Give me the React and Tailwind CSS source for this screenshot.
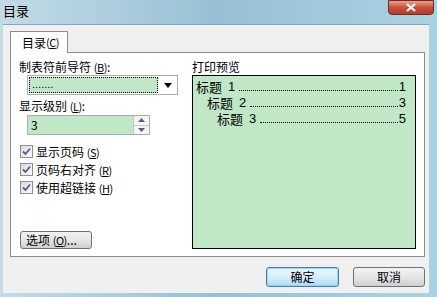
import React from 'react';

const font = { fontFamily: '"Noto Sans CJK SC", "Liberation Sans", sans-serif' };

const Key = ({ k }) => (
  <span className="text-[11px] tracking-[-0.5px]">
    (<span className="underline">{k}</span>)
  </span>
);

const CheckBox = ({ label, k }) => (
  <label className="flex items-center gap-[3px] h-[17px]">
    <span className="w-[13px] h-[13px] border border-[#8e8f8f] bg-gradient-to-br from-[#dcdcdc] to-[#fbfbfb] flex items-center justify-center">
      <svg width="9" height="9" viewBox="0 0 9 9">
        <path d="M1 4.5 L3.5 7 L8 1.5" fill="none" stroke="#4a5f97" strokeWidth="1.8" />
      </svg>
    </span>
    <span className="text-[12px] text-black">
      {label} <Key k={k} />
    </span>
  </label>
);

const Leader = () => (
  <span className="flex-1 self-end mb-[4px] ml-[4px] mr-[1px] border-b border-dotted border-black" />
);

const PreviewLine = ({ indent, level, page }) => (
  <div className={`flex items-center h-[16px] leading-[16px] ${indent}`}>
    <span>标题</span>
    <span className="ml-[6px] font-['Liberation_Sans']">{level}</span>
    <Leader />
    <span className="font-['Liberation_Sans']">{page}</span>
  </div>
);

export default function App() {
  return (
    <div
      className="w-[437px] h-[297px] flex flex-col bg-gradient-to-r from-[#c3dbe6] via-[#97c0d6] to-[#a9d3e2] overflow-hidden"
      style={font}
    >
      {/* title bar */}
      <div className="h-[24px] flex items-start justify-between pl-[3px] pr-[3px]">
        <span className="text-[13px] leading-[21px] text-black">目录</span>
        <div className="w-[46px] h-[15px] rounded-b-[4px] border border-[#6d2a22] bg-gradient-to-b from-[#e8a08f] via-[#c7503a] to-[#b13d2a] flex items-center justify-center">
          <svg width="10" height="9" viewBox="0 0 10 9">
            <path d="M1 1 L9 8 M9 1 L1 8" stroke="white" strokeWidth="2.2" />
          </svg>
        </div>
      </div>

      {/* client area */}
      <div className="flex-1 ml-[3px] mr-[8px] mb-[4px] bg-[#f0f0f0] border-t border-[#8aa4b7] flex flex-col pt-[6px] pl-[7px] pr-[4px]">
        {/* tab header */}
        <div className="flex">
          <div className="h-[22px] w-[58px] bg-white border border-b-0 border-[#898c95] flex items-center pl-[11px] text-[12px] text-black -mb-px relative z-10">
            目录 <Key k="C" />
          </div>
        </div>

        {/* tab panel */}
        <div className="h-[205px] bg-white border border-[#898c95] flex pt-[6px] pl-[8px] pr-[8px] pb-[7px]">
          {/* left column */}
          <div className="w-[173px] flex flex-col text-[12px] text-black">
            <div className="h-[15px] leading-[15px]">
              制表符前导符 <Key k="B" />:
            </div>
            <div className="ml-[8px] mt-[1px] w-[151px] h-[20px] border border-[#abadb3] flex bg-white">
              <div className="flex-1 m-[1px] bg-[#c0e8c6] border border-dotted border-black flex items-end pl-[2px] pb-[3px] leading-[10px] text-[11px] font-['Liberation_Sans']">
                .......
              </div>
              <div className="w-[18px] flex items-center justify-center">
                <svg width="8" height="5" viewBox="0 0 8 5">
                  <path d="M0 0 L8 0 L4 5 Z" fill="black" />
                </svg>
              </div>
            </div>
            <div className="h-[15px] leading-[15px] mt-[3px]">
              显示级别 <Key k="L" />:
            </div>
            <div className="ml-[8px] mt-[2px] w-[123px] h-[20px] border border-[#abadb3] flex">
              <div className="flex-1 bg-[#c0e8c6] flex items-center pl-[3px] text-[12px]">3</div>
              <div className="w-[16px] flex flex-col border-l border-[#c8c8c8] bg-[#f4f4f4]">
                <div className="flex-1 flex items-center justify-center border-b border-[#c8c8c8]">
                  <svg width="7" height="4" viewBox="0 0 7 4">
                    <path d="M0 4 L7 4 L3.5 0 Z" fill="#4d6185" />
                  </svg>
                </div>
                <div className="flex-1 flex items-center justify-center">
                  <svg width="7" height="4" viewBox="0 0 7 4">
                    <path d="M0 0 L7 0 L3.5 4 Z" fill="#4d6185" />
                  </svg>
                </div>
              </div>
            </div>
            <div className="mt-[8px] ml-[1px] flex flex-col gap-[1px]">
              <CheckBox label="显示页码" k="S" />
              <CheckBox label="页码右对齐" k="R" />
              <CheckBox label="使用超链接" k="H" />
            </div>
            <div className="flex-1" />
            <button className="ml-[1px] w-[72px] h-[18px] rounded-[3px] border border-[#707070] bg-gradient-to-b from-[#f2f2f2] via-[#e6e6e6] to-[#cfcfcf] text-[12px] text-left pl-[5px] leading-[14px]">
              选项 <Key k="O" />...
            </button>
          </div>

          {/* right column */}
          <div className="flex-1 flex flex-col text-black">
            <div className="h-[15px] leading-[15px] text-[12px]">打印预览</div>
            <div className="mt-[1px] flex-1 bg-[#c0e8c6] border border-black pt-[3px] pl-[3px] pr-[9px] text-[13px] flex flex-col">
              <PreviewLine indent="" level="1" page="1" />
              <PreviewLine indent="pl-[11px]" level="2" page="3" />
              <PreviewLine indent="pl-[21px]" level="3" page="5" />
            </div>
          </div>
        </div>

        {/* dialog buttons */}
        <div className="flex justify-end gap-[14px] mt-[10px]">
          <button className="w-[73px] h-[20px] rounded-[3px] border border-[#3c7fb1] bg-gradient-to-b from-[#eaf6fd] via-[#d9f0fc] to-[#a7d9f5] shadow-[inset_0_0_0_1px_#9fd5f3] text-[12px] text-black">
            确定
          </button>
          <button className="w-[72px] h-[20px] rounded-[3px] border border-[#707070] bg-gradient-to-b from-[#f2f2f2] via-[#e6e6e6] to-[#cfcfcf] text-[12px] text-black">
            取消
          </button>
        </div>
      </div>
    </div>
  );
}
